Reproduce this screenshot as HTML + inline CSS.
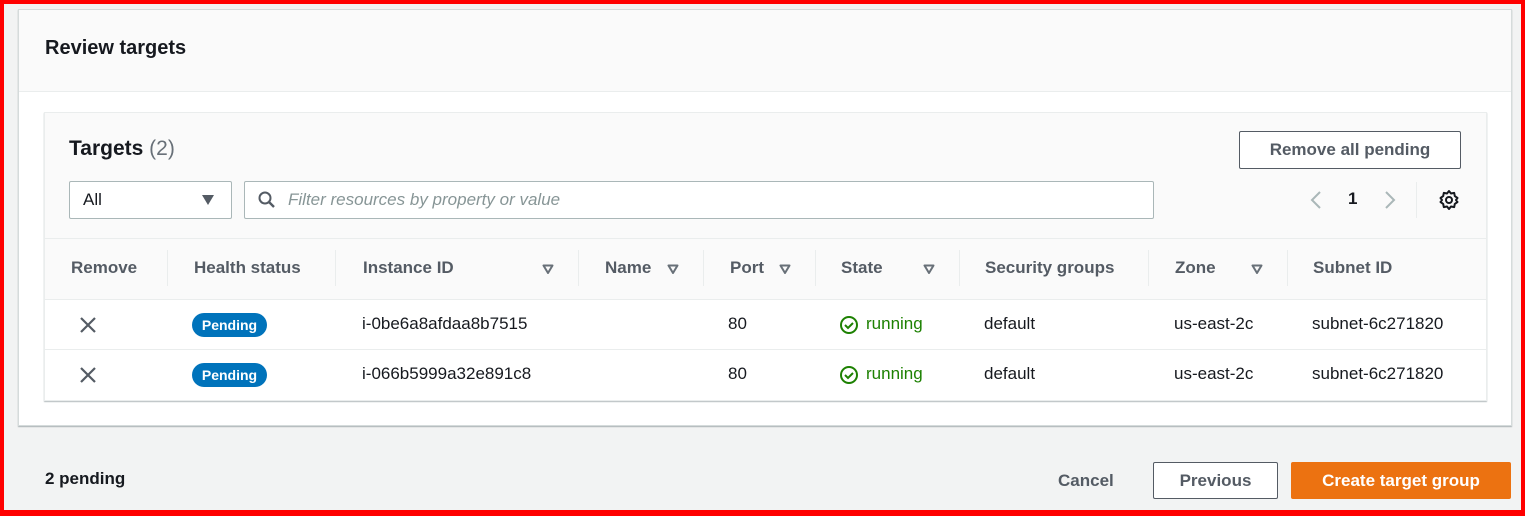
<!DOCTYPE html>
<html><head><style>
*{box-sizing:border-box;margin:0;padding:0}
body{width:1525px;height:516px;overflow:hidden;background:#f2f3f3;font-family:"Liberation Sans",Arial,sans-serif;color:#16191f;position:relative}
.frame{position:absolute;inset:0;border:4px solid #ff0000;border-bottom-width:6px;z-index:10;pointer-events:none}
.a{position:absolute}
.panel{left:18px;top:9px;width:1494px;height:417px;background:#fff;border:1px solid #d5dbdb;box-shadow:0 1px 1px rgba(0,28,36,.3)}
.ph{left:19px;top:10px;width:1492px;height:82px;background:#fafafa;border-bottom:1px solid #eaeded}
.inner{left:44px;top:112px;width:1443px;height:289px;background:#fafafa;border:1px solid #eaeded;box-shadow:0 1px 1px rgba(0,28,36,.3)}
.th{font-weight:bold;font-size:17px;color:#545b64;top:258px}
.td{font-size:17px;color:#16191f}
.sep{width:1px;height:36px;background:#eaeded;top:250px}
.tri{width:12px;height:10px}
.pill{background:#0073bb;color:#fff;font-weight:bold;font-size:14px;border-radius:12px;width:75px;height:24px;line-height:24px;text-align:center}
.run{color:#1d8102;font-size:17px}
.btn{border:1px solid #545b64;border-radius:2px;background:#fff;font-weight:bold;font-size:17px;color:#545b64;text-align:center}
</style></head><body>
<div class="frame"></div>
<div class="a panel"></div>
<div class="a ph"></div>
<div class="a" style="left:45px;top:37px;font-size:20px;font-weight:bold">Review targets</div>
<div class="a inner"></div>
<div class="a" style="left:45px;top:238px;width:1441px;height:162px;background:#fff"></div>
<div class="a" style="left:45px;top:238px;width:1441px;height:62px;background:#fafafa;border-top:1px solid #eaeded;border-bottom:1px solid #eaeded"></div>
<div class="a" style="left:45px;top:349px;width:1441px;height:1px;background:#eaeded"></div>
<div class="a" style="left:69px;top:137px;font-size:21px;font-weight:bold">Targets <span style="font-weight:normal;color:#687078">(2)</span></div>
<div class="a btn" style="left:1239px;top:131px;width:222px;height:38px;line-height:36px">Remove all pending</div>
<div class="a" style="left:69px;top:181px;width:163px;height:38px;border:1px solid #aab7b8;border-radius:2px;background:#fff;font-size:17px;line-height:36px;padding-left:13px">All</div>
<svg class="a" style="left:201px;top:194px" width="14" height="12"><path d="M1 1h12L7 11z" fill="#545b64"/></svg>
<div class="a" style="left:244px;top:181px;width:910px;height:38px;border:1px solid #aab7b8;border-radius:2px;background:#fff"></div>
<svg class="a" style="left:257px;top:190px" width="20" height="20" viewBox="0 0 20 20"><circle cx="8" cy="8" r="5.5" fill="none" stroke="#545b64" stroke-width="2"/><path d="M12 12l5 5" stroke="#545b64" stroke-width="2.4"/></svg>
<div class="a" style="left:288px;top:190px;font-size:17px;font-style:italic;color:#879596">Filter resources by property or value</div>
<svg class="a" style="left:1309px;top:190px" width="14" height="20"><path d="M11 2L3 10l8 8" fill="none" stroke="#aab7b8" stroke-width="2"/></svg>
<div class="a" style="left:1348px;top:189px;font-size:17px;font-weight:bold">1</div>
<svg class="a" style="left:1383px;top:190px" width="14" height="20"><path d="M3 2l8 8-8 8" fill="none" stroke="#aab7b8" stroke-width="2"/></svg>
<div class="a" style="left:1416px;top:182px;width:1px;height:36px;background:#eaeded"></div>
<svg class="a" style="left:1438px;top:189px" width="22" height="22" viewBox="0 0 22 22"><path d="M11 2l2 2.5 3.2-.6.6 3.2L19.5 9 18 11l1.5 2-2.7 1.9-.6 3.2-3.2-.6L11 20l-2-2.5-3.2.6-.6-3.2L2.5 13 4 11 2.5 9l2.7-1.9.6-3.2 3.2.6z" fill="none" stroke="#16191f" stroke-width="2" stroke-linejoin="round"/><circle cx="11" cy="11" r="3" fill="none" stroke="#16191f" stroke-width="2"/></svg>
<div class="a th" style="left:71px">Remove</div>
<div class="a sep" style="left:167px"></div>
<div class="a th" style="left:194px">Health status</div>
<div class="a sep" style="left:335px"></div>
<div class="a th" style="left:363px">Instance ID</div><svg class="a tri" style="left:542px;top:264px"><path d="M1.5 1.5h9L6 9z" fill="none" stroke="#687078" stroke-width="2" stroke-linejoin="round"/></svg>
<div class="a sep" style="left:578px"></div>
<div class="a th" style="left:605px">Name</div><svg class="a tri" style="left:667px;top:264px"><path d="M1.5 1.5h9L6 9z" fill="none" stroke="#687078" stroke-width="2" stroke-linejoin="round"/></svg>
<div class="a sep" style="left:703px"></div>
<div class="a th" style="left:730px">Port</div><svg class="a tri" style="left:779px;top:264px"><path d="M1.5 1.5h9L6 9z" fill="none" stroke="#687078" stroke-width="2" stroke-linejoin="round"/></svg>
<div class="a sep" style="left:815px"></div>
<div class="a th" style="left:841px">State</div><svg class="a tri" style="left:923px;top:264px"><path d="M1.5 1.5h9L6 9z" fill="none" stroke="#687078" stroke-width="2" stroke-linejoin="round"/></svg>
<div class="a sep" style="left:959px"></div>
<div class="a th" style="left:985px">Security groups</div>
<div class="a sep" style="left:1148px"></div>
<div class="a th" style="left:1175px">Zone</div><svg class="a tri" style="left:1251px;top:264px"><path d="M1.5 1.5h9L6 9z" fill="none" stroke="#687078" stroke-width="2" stroke-linejoin="round"/></svg>
<div class="a sep" style="left:1287px"></div>
<div class="a th" style="left:1313px">Subnet ID</div>

<svg class="a" style="left:79px;top:316px" width="18" height="18"><path d="M2 2l14 14M16 2L2 16" stroke="#545b64" stroke-width="2.2"/></svg>
<div class="a pill" style="left:192px;top:313px">Pending</div>
<div class="a td" style="left:362px;top:314px">i-0be6a8afdaa8b7515</div>
<div class="a td" style="left:728px;top:314px">80</div>
<svg class="a" style="left:839px;top:315px" width="20" height="20"><circle cx="10" cy="10" r="8" fill="none" stroke="#1d8102" stroke-width="2"/><path d="M6 10l3 3 5-5" fill="none" stroke="#1d8102" stroke-width="2"/></svg>
<div class="a run" style="left:866px;top:314px">running</div>
<div class="a td" style="left:984px;top:314px">default</div>
<div class="a td" style="left:1174px;top:314px">us-east-2c</div>
<div class="a td" style="left:1312px;top:314px">subnet-6c271820</div>

<svg class="a" style="left:79px;top:366px" width="18" height="18"><path d="M2 2l14 14M16 2L2 16" stroke="#545b64" stroke-width="2.2"/></svg>
<div class="a pill" style="left:192px;top:363px">Pending</div>
<div class="a td" style="left:362px;top:364px">i-066b5999a32e891c8</div>
<div class="a td" style="left:728px;top:364px">80</div>
<svg class="a" style="left:839px;top:365px" width="20" height="20"><circle cx="10" cy="10" r="8" fill="none" stroke="#1d8102" stroke-width="2"/><path d="M6 10l3 3 5-5" fill="none" stroke="#1d8102" stroke-width="2"/></svg>
<div class="a run" style="left:866px;top:364px">running</div>
<div class="a td" style="left:984px;top:364px">default</div>
<div class="a td" style="left:1174px;top:364px">us-east-2c</div>
<div class="a td" style="left:1312px;top:364px">subnet-6c271820</div>

<div class="a" style="left:45px;top:469px;font-size:17px;font-weight:bold">2 pending</div>
<div class="a" style="left:1058px;top:471px;font-size:17px;font-weight:bold;color:#545b64">Cancel</div>
<div class="a btn" style="left:1153px;top:462px;width:125px;height:37px;line-height:35px">Previous</div>
<div class="a" style="left:1291px;top:462px;width:220px;height:37px;line-height:37px;background:#ec7211;border-radius:2px;color:#fff;font-weight:bold;font-size:17px;text-align:center">Create target group</div>
</body></html>
